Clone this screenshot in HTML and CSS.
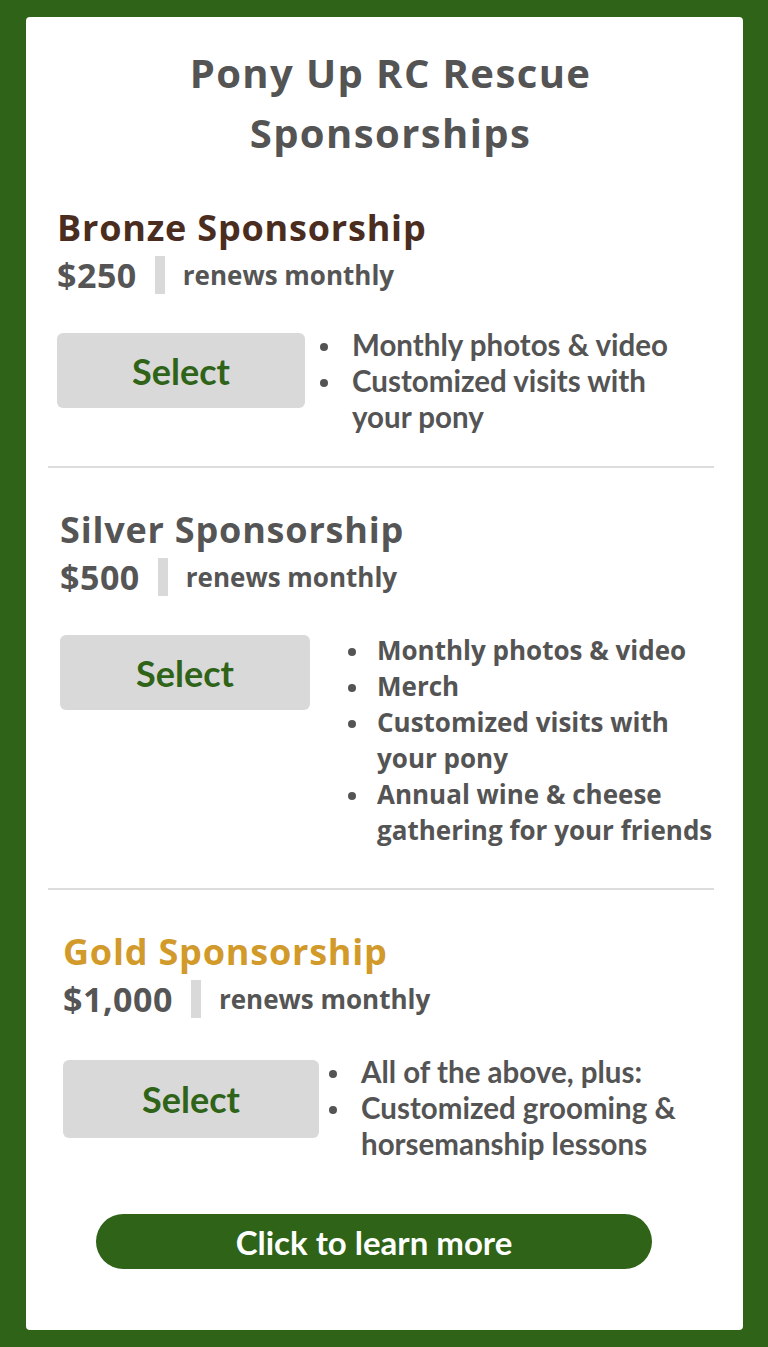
FILE: index.html
```html
<!DOCTYPE html>
<html>
<head>
  <title>Pony Up RC Rescue - Sponsorships</title>
  <link rel="stylesheet" href="styles.css">
</head>
<body>
  <div class="card">
    <h1 class="heading">Pony Up RC Rescue<br>Sponsorships</h1>

    <div class="tier tier-bronze">
      <h2 class="tier-name">Bronze Sponsorship</h2>
      <div class="price-row">
        <span class="price">$250</span>
        <span class="bar"></span>
        <span class="renew">renews monthly</span>
      </div>
      <div class="tier-body">
        <button class="select-button">Select</button>
        <ul class="perks narrow">
          <li>Monthly photos &amp; video</li>
          <li>Customized visits with your pony</li>
        </ul>
      </div>
    </div>

    <hr class="divider">

    <div class="tier tier-silver">
      <h2 class="tier-name">Silver Sponsorship</h2>
      <div class="price-row">
        <span class="price">$500</span>
        <span class="bar"></span>
        <span class="renew">renews monthly</span>
      </div>
      <div class="tier-body">
        <button class="select-button">Select</button>
        <ul class="perks wide">
          <li>Monthly photos &amp; video</li>
          <li>Merch</li>
          <li>Customized visits with your pony</li>
          <li>Annual wine &amp; cheese gathering for your friends</li>
        </ul>
      </div>
    </div>

    <hr class="divider">

    <div class="tier tier-gold">
      <h2 class="tier-name">Gold Sponsorship</h2>
      <div class="price-row">
        <span class="price">$1,000</span>
        <span class="bar"></span>
        <span class="renew">renews monthly</span>
      </div>
      <div class="tier-body">
        <button class="select-button">Select</button>
        <ul class="perks narrow">
          <li>All of the above, plus:</li>
          <li>Customized grooming &amp; horsemanship lessons</li>
        </ul>
      </div>
    </div>

    <div class="learn-wrap">
      <a class="learn-button" href="#">Click to learn more</a>
    </div>
  </div>
</body>
</html>
```

FILE: styles.css
```css
/* Sponsorship card */
body {
  margin: 0;
  background-color: #2e6318;
  font-family: "Open Sans", "Noto Sans", Arial, sans-serif;
  color: #545454;
}

.card {
  width: 717px;
  height: 1313px;
  box-sizing: border-box;
  margin: 17px 0 0 26px;
  background-color: #fff;
  border-radius: 4px;
  padding: 26px 0 0 0;
}

.heading {
  margin: 0;
  text-align: center;
  font-size: 40px;
  line-height: 60px;
  font-weight: 700;
  letter-spacing: 1.4px;
  color: #545454;
  padding-left: 12px;
}

.tier {
  padding-left: 31px;
}

.tier-silver {
  padding-left: 34px;
}

.tier-gold {
  padding-left: 37px;
}

.tier-name {
  margin: 43px 0 0 0;
  font-size: 36px;
  line-height: 44px;
  font-weight: 700;
  letter-spacing: 0.8px;
}

.tier-bronze .tier-name {
  color: #4a2d1f;
}

.tier-silver .tier-name {
  color: #555;
  margin-top: 40px;
}

.tier-gold .tier-name {
  color: #d19a2a;
  margin-top: 40px;
}

.price-row {
  display: flex;
  align-items: center;
  height: 44px;
  margin-top: 3px;
}

.price {
  font-size: 34px;
  font-weight: 700;
  letter-spacing: 0.5px;
  color: #555;
}

.bar {
  width: 10px;
  height: 38px;
  background-color: #d9d9d9;
  margin: 0 18px 0 18px;
}

.renew {
  font-size: 26px;
  font-weight: 700;
  color: #555;
}

.tier-body {
  display: flex;
  align-items: flex-start;
  margin-top: 36px;
}

.tier-gold .tier-body {
  margin-top: 39px;
}

.select-button {
  flex: none;
  width: 248px;
  height: 75px;
  background-color: #d9d9d9;
  border: none;
  border-radius: 6px;
  font-family: Lato, "Open Sans", sans-serif;
  font-size: 36px;
  font-weight: 700;
  color: #2e6318;
  cursor: pointer;
}

.tier-silver .select-button {
  width: 250px;
}

.tier-gold .select-button {
  width: 256px;
  height: 78px;
}

.perks {
  margin: 0;
  padding: 0;
  list-style: none;
  font-size: 26px;
  line-height: 36px;
  font-weight: 700;
  color: #545454;
}

.perks li {
  position: relative;
  padding-left: 30px;
}

.perks li::before {
  content: "";
  position: absolute;
  left: 1px;
  top: 16px;
  width: 8px;
  height: 8px;
  border-radius: 50%;
  background-color: #545454;
}

.narrow {
  font-family: Lato, "Open Sans", sans-serif;
  font-size: 29.5px;
  margin: -6px 0 0 14px;
  width: 360px;
}

.narrow li {
  padding-left: 33px;
}

.wide {
  width: 372px;
  margin: -3px 0 0 37px;
}

.tier-gold .narrow {
  margin-left: 9px;
}

.divider {
  border: none;
  border-top: 2px solid #dcdcdc;
  margin: 31px 29px 0 22px;
}

.tier-silver + .divider {
  margin-top: 40px;
}

.learn-wrap {
  display: flex;
  padding-left: 70px;
  margin-top: 52px;
}

.learn-button {
  display: flex;
  align-items: center;
  justify-content: center;
  width: 556px;
  height: 55px;
  border-radius: 28px;
  background-color: #2e6318;
  color: #fff;
  text-decoration: none;
  font-family: Lato, "Open Sans", sans-serif;
  font-size: 33px;
  font-weight: 700;
}
```
